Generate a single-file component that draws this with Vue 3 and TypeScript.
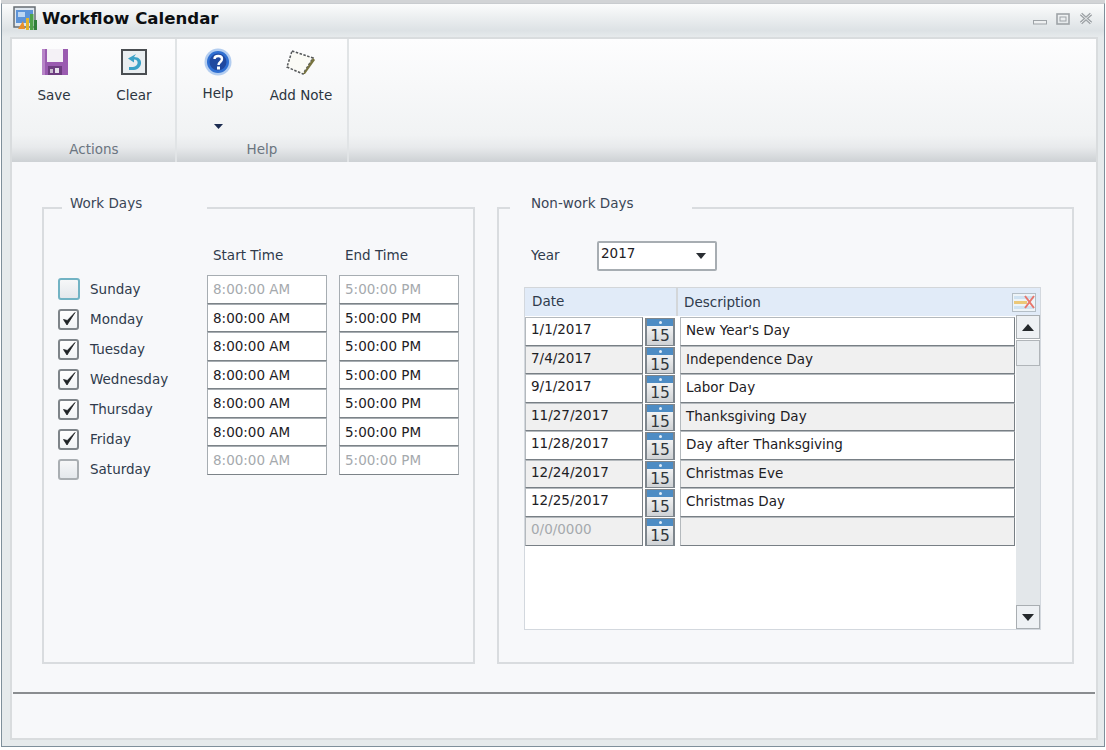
<script setup lang="ts">
interface Day { name: string; on: boolean; focus?: boolean; start: string; end: string }
interface Holiday { date: string; text: string; empty?: boolean }

const days: Day[] = [
  { name: 'Sunday', on: false, focus: true, start: '8:00:00 AM', end: '5:00:00 PM' },
  { name: 'Monday', on: true, start: '8:00:00 AM', end: '5:00:00 PM' },
  { name: 'Tuesday', on: true, start: '8:00:00 AM', end: '5:00:00 PM' },
  { name: 'Wednesday', on: true, start: '8:00:00 AM', end: '5:00:00 PM' },
  { name: 'Thursday', on: true, start: '8:00:00 AM', end: '5:00:00 PM' },
  { name: 'Friday', on: true, start: '8:00:00 AM', end: '5:00:00 PM' },
  { name: 'Saturday', on: false, start: '8:00:00 AM', end: '5:00:00 PM' },
]

const holidays: Holiday[] = [
  { date: '1/1/2017', text: "New Year's Day" },
  { date: '7/4/2017', text: 'Independence Day' },
  { date: '9/1/2017', text: 'Labor Day' },
  { date: '11/27/2017', text: 'Thanksgiving Day' },
  { date: '11/28/2017', text: 'Day after Thanksgiving' },
  { date: '12/24/2017', text: 'Christmas Eve' },
  { date: '12/25/2017', text: 'Christmas Day' },
  { date: '0/0/0000', text: '', empty: true },
]
</script>

<template>
  <div class="window">
    <header class="titlebar">
      <svg class="app-icon" width="25" height="25" viewBox="0 0 25 25">
        <rect x="1" y="1" width="21" height="20" fill="#dfe7ef" stroke="#666c72" stroke-width="1.5" />
        <rect x="3" y="4" width="17" height="13" fill="#5d94d8" />
        <rect x="5" y="6" width="7" height="5" fill="#bcd6f2" />
        <path d="M5 23 L10 15 L12 23 Z" fill="#e8902c" />
        <rect x="13" y="12" width="3" height="12" fill="#e2b52e" />
        <rect x="17" y="8" width="3.5" height="16" fill="#4ea24a" />
        <rect x="21" y="14" width="3" height="10" fill="#2f7f3a" />
      </svg>
      <h1 class="title">Workflow Calendar</h1>
      <div class="controls">
        <svg width="14" height="12" viewBox="0 0 14 12"><rect x="0.5" y="7.5" width="13" height="3.5" fill="#eef0f1" stroke="#9ea3a7" /></svg>
        <svg width="14" height="12" viewBox="0 0 14 12"><rect x="1" y="1" width="12" height="10" fill="none" stroke="#9ea3a7" stroke-width="1.6" /><rect x="4" y="4" width="6" height="4" fill="none" stroke="#9ea3a7" /></svg>
        <svg width="14" height="13" viewBox="0 0 14 13"><path d="M2 2 L12 11 M12 2 L2 11" stroke="#9ea3a7" stroke-width="3.4" /><path d="M2 2 L12 11 M12 2 L2 11" stroke="#eef0f1" stroke-width="1" /></svg>
      </div>
    </header>

    <div class="frame">
      <section class="ribbon">
        <div class="group group-actions">
          <div class="tools">
            <button class="tool">
              <svg class="tool-icon icon-save" width="30" height="30" viewBox="0 0 30 30">
                <path d="M2 2 H28 V28 H2 Z" fill="#9a5bb0" />
                <rect x="2" y="2" width="3" height="26" fill="#b785c8" />
                <rect x="7" y="2" width="16" height="13" fill="#f4f1f6" />
                <rect x="8" y="19" width="14" height="9" fill="#6d3d80" />
                <rect x="15" y="21" width="4" height="5" fill="#e8e2ec" />
                <rect x="10" y="22" width="3" height="4" fill="#c9bcd0" />
              </svg>
              <span>Save</span>
            </button>
            <button class="tool">
              <svg class="tool-icon" width="30" height="30" viewBox="0 0 30 30">
                <rect x="2" y="2" width="26" height="26" fill="#4a4e52" />
                <rect x="4" y="4" width="22" height="22" fill="#e9eef1" />
                <path d="M17 7 L9 11.5 L15 15.5 V12.5 C20 12.5 20 19 14 20 L10 20 V23 L15 23 C24 22 25 10 15 10 Z" fill="#3aa2c8" />
              </svg>
              <span>Clear</span>
            </button>
          </div>
          <div class="group-label label-actions">Actions</div>
        </div>
        <div class="group group-help">
          <div class="tools">
            <button class="tool tool-help">
              <svg class="tool-icon" width="30" height="30" viewBox="0 0 30 30">
                <circle cx="15" cy="15" r="13.5" fill="#b3cdf0" />
                <circle cx="15" cy="15" r="11" fill="#2f6fd2" />
                <circle cx="15" cy="15" r="8.5" fill="#20489f" />
                <path d="M11.5 12 C11.5 8 19 8 19 12 C19 15 15.5 15 15.5 18" fill="none" stroke="#fff" stroke-width="2.4" />
                <rect x="14" y="19.5" width="3" height="3" fill="#fff" />
              </svg>
              <span>Help</span>
              <svg class="caret" width="9" height="5" viewBox="0 0 9 5"><path d="M0 0 H9 L4.5 5 Z" fill="#1c2c50" /></svg>
            </button>
            <button class="tool">
              <svg class="tool-icon" width="30" height="30" viewBox="0 0 30 30">
                <path d="M6 4 L27 11 L17 27 L1 20 Z" fill="#fbfbf6" stroke="#55585a" stroke-width="1.5" stroke-dasharray="2.5 1.5" />
                <path d="M27 11 L29 13 L19 27 L17 27 Z" fill="#77733f" />
              </svg>
              <span>Add Note</span>
            </button>
          </div>
          <div class="group-label">Help</div>
        </div>
        <div class="group-rest">
          <div class="rest-fill"></div>
          <div class="group-label"></div>
        </div>
      </section>

      <main class="content">
        <fieldset class="panel panel-work">
          <legend class="legend legend-work"><span>Work Days</span></legend>
          <div class="work-body">
            <ul class="days">
              <li v-for="d in days" :key="d.name" class="day">
                <span class="check" :class="{ focus: d.focus, plain: !d.on }">
                  <svg v-if="d.on" width="16" height="16" viewBox="0 0 16 16"><path d="M2.5 8.5 L6 14 L14 1.5 L6.3 9.5 Z" fill="#1e2225" stroke="#1e2225" stroke-width="0.8" stroke-linejoin="round" /></svg>
                </span>
                <span class="day-name">{{ d.name }}</span>
              </li>
            </ul>
            <div class="times">
              <div class="time-head">Start Time</div>
              <div class="time-head">End Time</div>
              <template v-for="d in days" :key="d.name">
                <div class="time" :class="{ off: !d.on }">{{ d.start }}</div>
                <div class="time" :class="{ off: !d.on }">{{ d.end }}</div>
              </template>
            </div>
          </div>
        </fieldset>

        <fieldset class="panel panel-non">
          <legend class="legend legend-non"><span>Non-work Days</span></legend>
          <div class="year-row">
            <span class="year-label">Year</span>
            <div class="select">
              <span>2017</span>
              <svg width="10" height="6" viewBox="0 0 10 6"><path d="M0 0 H10 L5 6 Z" fill="#2a2e33" /></svg>
            </div>
          </div>
          <div class="grid">
            <div class="grid-head">
              <div class="head-date">Date</div>
              <div class="head-desc">
                <span>Description</span>
                <svg width="24" height="19" viewBox="0 0 24 19">
                  <rect x="0.5" y="0.5" width="23" height="18" fill="#eef4f8" stroke="#b4bec6" />
                  <rect x="2" y="3" width="20" height="3" fill="#cfe2f2" />
                  <rect x="2" y="8" width="13" height="3" fill="#ecc878" />
                  <rect x="2" y="13" width="20" height="3" fill="#cfe2f2" />
                  <path d="M13 3 L22 15 M22 3 L13 15" stroke="#e8766c" stroke-width="2" />
                </svg>
              </div>
            </div>
            <div class="grid-body">
              <div class="rows">
                <div v-for="(h, i) in holidays" :key="h.date" class="row" :class="{ alt: i % 2 === 1 }">
                  <div class="cell" :class="{ muted: h.empty }">{{ h.date }}</div>
                  <div class="cal">
                    <div class="cal-top"><i></i></div>
                    <div class="cal-num">15</div>
                  </div>
                  <div class="cell cell-desc">{{ h.text }}</div>
                </div>
              </div>
              <div class="scrollbar">
                <div class="sb-btn"><svg width="12" height="7" viewBox="0 0 12 7"><path d="M6 0 L12 7 H0 Z" fill="#25292c" /></svg></div>
                <div class="sb-thumb"></div>
                <div class="sb-track"></div>
                <div class="sb-btn sb-down"><svg width="12" height="7" viewBox="0 0 12 7"><path d="M0 0 H12 L6 7 Z" fill="#25292c" /></svg></div>
              </div>
            </div>
          </div>
        </fieldset>
      </main>

      <footer class="status"></footer>
    </div>
  </div>
</template>

<style>
html, body { margin: 0; background: #fff; }
</style>

<style scoped>
* { box-sizing: border-box; }
.window {
  width: 1104px;
  height: 744px;
  margin: 3px 0 0 1px;
  display: flex;
  flex-direction: column;
  padding: 0 6px 6px 8px;
  border: 1px solid #7f8f9b;
  border-top-color: #c9cccf;
  background: #e6eaec;
  font-family: "DejaVu Sans", sans-serif;
  font-size: 13.5px;
  color: #2f3b4c;
  box-shadow: 0 -3px 0 #d2d4d6;
}
.titlebar {
  height: 33px;
  margin: 0 -6px 0 -8px;
  padding: 0 11px 4px 11px;
  display: flex;
  align-items: center;
  background: linear-gradient(#fbfcfc, #dde2e5 80%, #e6eaec);
}
.app-icon { margin-right: 4px; }
.title {
  margin: 0;
  font-size: 16.6px;
  font-weight: 700;
  color: #0c0f12;
}
.controls {
  margin-left: auto;
  display: flex;
  gap: 9px;
  align-items: center;
}
.frame {
  flex: 1;
  display: flex;
  flex-direction: column;
  border: 2px solid #d9dcde;
  background: #f7f8fa;
  min-height: 0;
}
.ribbon {
  height: 123px;
  display: flex;
  flex: none;
}
.group {
  display: flex;
  flex-direction: column;
  border-right: 2px solid #e1e4e6;
}
.group-actions { width: 165px; }
.group-help { width: 172px; }
.group-rest { flex: 1; display: flex; flex-direction: column; }
.rest-fill, .tools {
  flex: 1;
  background: linear-gradient(#fdfdfe, #f1f3f4);
}
.tools {
  display: flex;
  padding-left: 2px;
}
.group-help .tools { padding-left: 1px; gap: 3px; }
.tool {
  width: 80px;
  border: 0;
  padding: 8px 0 0;
  background: none;
  font: inherit;
  color: #2c3540;
  display: flex;
  flex-direction: column;
  align-items: center;
}
.tool span { margin-top: 9px; line-height: 18px; }
.icon-save { margin-left: 1px; }
.tool-help span { margin-top: 7px; }
.caret { margin-top: 22px; }
.group-label {
  height: 27px;
  line-height: 27px;
  padding-top: 1px;
  text-align: center;
  color: #6b7580;
  background: linear-gradient(#f1f3f4, #e8eaec 45%, #cdd1d4);
}
.label-actions { padding-left: 1px; }
.content {
  flex: 1;
  min-height: 0;
  display: flex;
  padding: 33px 0 0 30px;
  gap: 22px;
}
.panel {
  margin: 0;
  padding: 0;
  height: 469px;
  border: 2px solid #d9dcdf;
  min-width: 0;
}
.panel-work { width: 433px; }
.panel-non { width: 577px; }
.legend {
  padding: 0 0 9px 8px;
  line-height: 17px;
  color: #3a4656;
}
.legend-work { width: 145px; margin-left: 18px; }
.legend-non { width: 182px; margin-left: 11px; padding-left: 21px; }
.work-body { display: flex; }
.days {
  list-style: none;
  margin: 53px 0 0 14px;
  padding: 0;
  width: 149px;
}
.day {
  height: 30px;
  display: flex;
  align-items: center;
}
.check {
  width: 21px;
  height: 21px;
  margin-right: 11px;
  border: 2px solid #7e8489;
  border-radius: 3px;
  background: linear-gradient(#fff, #f0f2f4);
  display: flex;
  align-items: center;
  justify-content: center;
}
.check.plain { border-color: #a9aeb2; background: linear-gradient(#f6f7f8, #e4e8ec); }
.check.focus { width: 22px; height: 22px; margin-right: 10px; border-color: #72b3c4; }
.times {
  padding-top: 20px;
  display: grid;
  grid-template-columns: 120px 120px;
  column-gap: 12px;
  grid-auto-rows: 28.57px;
  grid-template-rows: 34px;
}
.time-head { line-height: 29px; padding-left: 6px; }
.time {
  border: 1.5px solid #a7adb2;
  border-bottom-color: #7c8388;
  background: #fff;
  color: #1d2024;
  padding-left: 5px;
  line-height: 26px;
}
.time.off { color: #a5a9ad; }
.year-row {
  display: flex;
  align-items: center;
  height: 30px;
  margin: 20px 0 0 32px;
}
.year-label { width: 66px; padding-bottom: 3px; }
.select {
  width: 120px;
  height: 30px;
  border: 2px solid #a7adb2;
  border-radius: 2px;
  background: #fff;
  color: #1d2024;
  padding: 0 9px 6px 2px;
  display: flex;
  align-items: center;
  justify-content: space-between;
}
.select svg { margin-top: 6px; }
.grid {
  width: 517px;
  height: 343px;
  margin: 16px 0 0 25px;
  border: 1px solid #d3d8de;
  border-top: 0;
  background: #fff;
  display: flex;
  flex-direction: column;
}
.grid-head {
  height: 29px;
  flex: none;
  display: flex;
  gap: 2px;
  background: #d3d6d9;
  border-top: 1px solid #d3d6d9;
}
.head-date, .head-desc {
  background: #e1ebf8;
  padding-left: 7px;
  line-height: 27px;
}
.head-date { width: 151px; }
.head-desc {
  flex: 1;
  display: flex;
  align-items: center;
  justify-content: space-between;
  padding-left: 6px;
  padding-right: 4px;
}
.grid-body { flex: 1; min-height: 0; display: flex; }
.rows { flex: 1; padding-top: 1px; }
.row {
  height: 28.57px;
  display: flex;
  gap: 2px;
}
.cell {
  width: 118px;
  background: #fff;
  border: 1.5px solid #b4b9bd;
  border-right-color: #787f85;
  border-bottom-color: #787f85;
  color: #1d2024;
  padding-left: 5px;
  line-height: 23px;
}
.alt .cell { background: #f0f0f0; }
.cell.muted { color: #a5a9ad; }
.cell-desc { width: 335px; margin-left: 3px; line-height: 25px; }
.cal {
  width: 30px;
  margin-top: 1px;
  border: 1px solid #7e868d;
  border-left-width: 2px;
  border-right-width: 2px;
  background: linear-gradient(#fff, #cfd2d5);
  display: flex;
  flex-direction: column;
  align-items: center;
}
.cal-top {
  width: 100%;
  height: 7px;
  flex: none;
  background: #4d8cc4;
  display: flex;
  align-items: center;
  justify-content: center;
}
.cal-top i { width: 3px; height: 3px; background: #e3eef8; border-radius: 50%; }
.cal-num { font-size: 15.5px; line-height: 20px; color: #30363b; }
.scrollbar {
  width: 24px;
  flex: none;
  margin-top: -1px;
  display: flex;
  flex-direction: column;
}
.sb-btn {
  height: 24px;
  flex: none;
  border: 1.5px solid #a9aeb2;
  background: #eef1f4;
  display: flex;
  align-items: center;
  justify-content: center;
}
.sb-thumb { height: 26px; flex: none; margin-top: 1px; border: 1.5px solid #b0b5b9; background: #e9edf0; }
.sb-track { flex: 1; background: #e3e7ea; }
.status {
  height: 46px;
  flex: none;
  margin: 0 1px;
  border-top: 2px solid #8a8d90;
}
</style>
